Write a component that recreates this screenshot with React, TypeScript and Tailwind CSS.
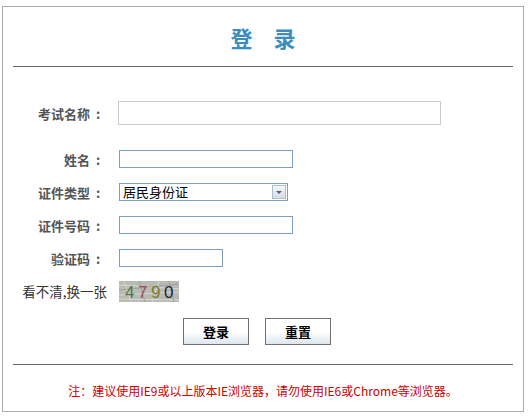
import React from 'react';

const inputCls = 'h-[18px] border border-[#7f9db9] bg-white outline-none px-1 text-[13px]';

const Row = ({ label, children, className = '' }: { label: string; children: React.ReactNode; className?: string }) => (
  <div className={`flex items-center ${className}`}>
    <span className="w-[93px] shrink-0 flex justify-end items-center text-[13px] font-semibold text-[#555] leading-none">
      {label}
      <span className="w-[16px] text-center">:</span>
    </span>
    <div className="ml-[13px] flex items-center">{children}</div>
  </div>
);

const Captcha = () => (
  <svg width="60" height="21" viewBox="0 0 60 21" className="block">
    <rect width="60" height="21" fill="#b9bab3" />
    <path d="M0 4 L60 8 M0 14 L60 11 M5 0 L12 21 M40 0 L33 21 M0 18 L60 19" stroke="#d8d8d2" strokeWidth="1" />
    <path d="M0 9 L60 3 M20 0 L26 21 M50 0 L55 21" stroke="#9a9c94" strokeWidth="0.8" />
    <text x="6" y="17" fontSize="17" fontFamily="Liberation Sans, sans-serif" fill="#4f7a45">4</text>
    <text x="19" y="17" fontSize="17" fontFamily="Liberation Sans, sans-serif" fill="#9a4d5c">7</text>
    <text x="32" y="17" fontSize="17" fontFamily="Liberation Sans, sans-serif" fill="#7c7d2e">9</text>
    <text x="45" y="17" fontSize="17" fontFamily="Liberation Sans, sans-serif" fill="#1f2342">0</text>
  </svg>
);

const Btn = ({ children }: { children: React.ReactNode }) => (
  <button className="w-[66px] h-[27px] border border-[#707070] bg-gradient-to-b from-white via-white to-[#dde6ef] text-[13px] font-semibold text-black leading-none">
    {children}
  </button>
);

export default function App() {
  return (
    <div className="w-[529px] h-[419px] bg-white pt-[6px] pl-[2px]" style={{ fontFamily: '"Noto Sans CJK SC", sans-serif' }}>
      <div className="w-[522px] h-[406px] border border-[#ababab] px-[10px] flex flex-col">
        {/* title */}
        <div className="h-[59px] flex items-center justify-center">
          <h1 className="text-[22px] font-bold text-[#3a8dbe] tracking-[21px] pl-[21px] leading-none">登录</h1>
        </div>
        <div className="h-px bg-[#666]" />

        {/* form */}
        <div className="flex flex-col pt-[34px]">
          <Row label="考试名称">
            <input className="w-[323px] h-[24px] -ml-px border border-[#cccccc] bg-white outline-none" />
          </Row>
          <Row label="姓名" className="mt-[25px]">
            <input className={`${inputCls} w-[174px]`} />
          </Row>
          <Row label="证件类型" className="mt-[15px]">
            <div className="w-[169px] h-[18px] border border-[#7f9db9] bg-white flex items-center justify-between">
              <span className="pl-[3px] pb-[2px] text-[13px] text-black leading-none">居民身份证</span>
              <span className="w-[14px] h-[14px] mr-px border border-[#b3bdc9] bg-gradient-to-b from-[#f4f6f9] to-[#d6dde6] flex items-center justify-center">
                <svg width="6" height="3" viewBox="0 0 6 3"><path d="M0 0 H6 L3 3 Z" fill="#4d6185" /></svg>
              </span>
            </div>
          </Row>
          <Row label="证件号码" className="mt-[15px]">
            <input className={`${inputCls} w-[174px]`} />
          </Row>
          <Row label="验证码" className="mt-[15px]">
            <input className={`${inputCls} w-[104px]`} />
          </Row>
          <div className="flex items-center mt-[14px]">
            <span className="w-[94px] shrink-0 text-right text-[13.5px] text-[#333] leading-none">看不清,换一张</span>
            <div className="ml-[12px]"><Captcha /></div>
          </div>
          <div className="flex justify-center gap-[16px] mt-[16px] pr-[12px]">
            <Btn>登录</Btn>
            <Btn>重置</Btn>
          </div>
        </div>

        <div className="h-px bg-[#666] mt-[19px]" />
        <div className="flex-1 flex items-center justify-center pt-[5px]">
          <p className="text-[12px] text-[#cc0000] leading-none">注：建议使用IE9或以上版本IE浏览器，请勿使用IE6或Chrome等浏览器。</p>
        </div>
      </div>
    </div>
  );
}
